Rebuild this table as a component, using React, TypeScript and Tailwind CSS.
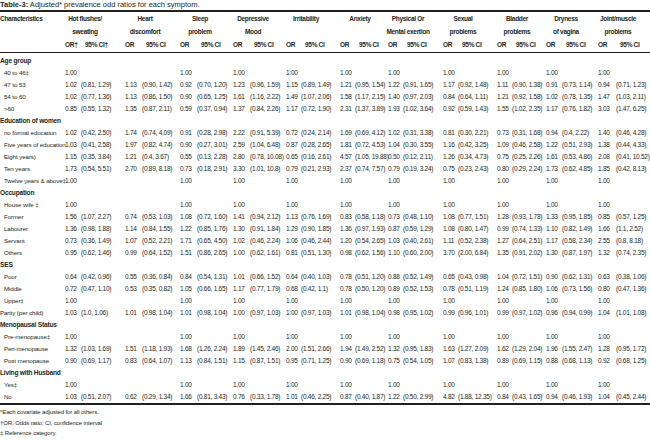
const GRID =
  'grid grid-cols-[65px_16px_44px_17px_38px_17px_36px_17px_36px_15px_39px_15px_33px_15px_40px_15px_39px_15px_34px_16px_36px_18px_34px]'

const FONT = "font-['Liberation_Sans_Narrow','Liberation_Sans',sans-serif]"

const symptoms = [
  ['Hot flushes/', 'sweating'],
  ['Heart', 'discomfort'],
  ['Sleep', 'problem'],
  ['Depressive', 'Mood'],
  ['Irritability', ''],
  ['Anxiety', ''],
  ['Physical Or', 'Mental exertion'],
  ['Sexual', 'problems'],
  ['Bladder', 'problems'],
  ['Dryness', 'of vagina'],
  ['Joint/muscle', 'problems'],
]

// reference category rows: heart discomfort column is left blank
const REF = '1.00|-|1.00|1.00|1.00|1.00|1.00|1.00|1.00|1.00|1.00'

type Row =
  | { section: string }
  | { label: string; values: string; plain?: boolean }

const rows: Row[] = [
  { section: 'Age group' },
  { label: '40 to 46‡', values: REF },
  {
    label: '47 to 53',
    values:
      '1.02 (0.81, 1.29)|1.13 (0.90, 1.42)|0.92 (0.70, 1.20)|1.23 (0.96, 1.59)|1.15 (0.89, 1.49)|1.21 (0.95, 1.54)|1.22 (0.91, 1.65)|1.17 (0.92, 1.48)|1.11 (0.90, 1.38)|0.91 (0.73, 1.14)|0.94 (0.71, 1.23)',
  },
  {
    label: '54 to 60',
    values:
      '1.02 (0.77, 1.36)|1.13 (0.86, 1.50)|0.90 (0.65, 1.25)|1.61 (1.16, 2.22)|1.49 (1.07, 2.06)|1.58 (1.17, 2.15)|1.40 (0.97, 2.03)|0.84 (0.64, 1.11)|1.21 (0.92, 1.58)|1.02 (0.78, 1.35)|1.47 (1.03, 2.11)',
  },
  {
    label: '>60',
    values:
      '0.85 (0.55, 1.32)|1.35 (0.87, 2.11)|0.59 (0.37, 0.94)|1.37 (0.84, 2.26)|1.17 (0.72, 1.90)|2.31 (1.37, 3.89)|1.93 (1.02, 3.64)|0.92 (0.59, 1.43)|1.55 (1.02, 2.35)|1.17 (0.76, 1.82)|3.03 (1.47, 6.25)',
  },
  { section: 'Education of women' },
  {
    label: 'no formal education',
    values:
      '1.02 (0.42, 2.50)|1.74 (0.74, 4.09)|0.91 (0.28, 2.98)|2.22 (0.91, 5.39)|0.72 (0.24, 2.14)|1.69 (0.69, 4.12)|1.02 (0.31, 3.38)|0.81 (0.30, 2.21)|0.73 (0.31, 1.68)|0.94 (0.4, 2.22)|1.40 (0.46, 4.28)',
  },
  {
    label: 'Five years of education',
    values:
      '1.03 (0.41, 2.58)|1.97 (0.82, 4.74)|0.90 (0.27, 3.01)|2.59 (1.04, 6.48)|0.87 (0.28, 2.65)|1.81 (0.72, 4.53)|1.04 (0.30, 3.55)|1.16 (0.42, 3.25)|1.09 (0.46, 2.58)|1.22 (0.51, 2.93)|1.38 (0.44, 4.33)',
  },
  {
    label: 'Eight years)',
    values:
      '1.15 (0.35, 3.84)|1.21 (0.4, 3.67)|0.55 (0.13, 2.28)|2.80 (0.78, 10.08)|0.65 (0.16, 2.61)|4.57 (1.05, 19.88)|0.50 (0.12, 2.11)|1.26 (0.34, 4.73)|0.75 (0.25, 2.26)|1.61 (0.53, 4.86)|2.08 (0.41, 10.52)',
  },
  {
    label: 'Ten years',
    values:
      '1.73 (0.54, 5.51)|2.70 (0.89, 8.18)|0.73 (0.18, 2.91)|3.30 (1.01, 10.8)|0.79 (0.21, 2.93)|2.37 (0.74, 7.57)|0.79 (0.19, 3.24)|0.75 (0.23, 2.43)|0.80 (0.29, 2.24)|1.73 (0.62, 4.85)|1.85 (0.42, 8.13)',
  },
  { label: 'Twelve years & above‡', values: REF },
  { section: 'Occupation' },
  { label: 'House wife ‡', values: REF },
  {
    label: 'Former',
    values:
      '1.56 (1.07, 2.27)|0.74 (0.53, 1.03)|1.08 (0.72, 1.60)|1.41 (0.94, 2.12)|1.13 (0.76, 1.69)|0.83 (0.58, 1.18)|0.73 (0.48, 1.10)|1.08 (0.77, 1.51)|1.28 (0.93, 1.78)|1.33 (0.95, 1.85)|0.85 (0.57, 1.25)',
  },
  {
    label: 'Labourer',
    values:
      '1.36 (0.98, 1.88)|1.14 (0.84, 1.55)|1.22 (0.85, 1.76)|1.30 (0.91, 1.84)|1.29 (0.90, 1.85)|1.36 (0.97, 1.93)|0.87 (0.59, 1.29)|1.08 (0.80, 1.47)|0.99 (0.74, 1.33)|1.10 (0.82, 1.49)|1.66 (1.1, 2.52)',
  },
  {
    label: 'Servant',
    values:
      '0.73 (0.36, 1.49)|1.07 (0.52, 2.21)|1.71 (0.65, 4.50)|1.02 (0.46, 2.24)|1.06 (0.46, 2.44)|1.20 (0.54, 2.65)|1.03 (0.40, 2.61)|1.11 (0.52, 2.38)|1.27 (0.64, 2.51)|1.17 (0.58, 2.34)|2.55 (0.8, 8.18)',
  },
  {
    label: 'Others',
    values:
      '0.95 (0.62, 1.46)|0.99 (0.64, 1.52)|1.51 (0.86, 2.65)|1.00 (0.62, 1.61)|0.81 (0.51, 1.30)|0.98 (0.62, 1.56)|1.10 (0.60, 2.00)|3.70 (2.00, 6.84)|1.35 (0.91, 2.02)|1.30 (0.87, 1.97)|1.32 (0.74, 2.35)',
  },
  { section: 'SES' },
  {
    label: 'Poor',
    values:
      '0.64 (0.42, 0.96)|0.55 (0.36, 0.84)|0.84 (0.54, 1.31)|1.01 (0.66, 1.52)|0.64 (0.40, 1.03)|0.78 (0.51, 1.20)|0.88 (0.52, 1.49)|0.65 (0.43, 0.98)|1.04 (0.72, 1.51)|0.90 (0.62, 1.31)|0.63 (0.38, 1.06)',
  },
  {
    label: 'Middle',
    values:
      '0.72 (0.47, 1.10)|0.53 (0.35, 0.82)|1.05 (0.66, 1.65)|1.17 (0.77, 1.79)|0.68 (0.42, 1.1)|0.78 (0.50, 1.20)|0.89 (0.52, 1.53)|0.78 (0.51, 1.19)|1.24 (0.85, 1.80)|1.06 (0.73, 1.56)|0.80 (0.47, 1.36)',
  },
  { label: 'Upper‡', values: REF },
  {
    label: 'Parity (per child)',
    plain: true,
    values:
      '1.03 (1.0, 1.06)|1.01 (0.98, 1.04)|1.01 (0.98, 1.04)|1.00 (0.97, 1.03)|1.00 (0.97, 1.03)|1.01 (0.98, 1.04)|0.98 (0.95, 1.02)|0.99 (0.96, 1.01)|0.99 (0.97, 1.02)|0.96 (0.94, 0.99)|1.04 (1.01, 1.08)',
  },
  { section: 'Menopausal Status' },
  { label: 'Pre-menopause‡', values: REF },
  {
    label: 'Peri-menopause',
    values:
      '1.32 (1.03, 1.69)|1.51 (1.18, 1.93)|1.68 (1.26, 2.24)|1.89 (1.45, 2.46)|2.00 (1.51, 2.66)|1.94 (1.49, 2.52)|1.32 (0.95, 1.83)|1.63 (1.27, 2.09)|1.62 (1.29, 2.04)|1.96 (1.55, 2.47)|1.28 (0.95, 1.72)',
  },
  {
    label: 'Post menopause',
    values:
      '0.90 (0.69, 1.17)|0.83 (0.64, 1.07)|1.13 (0.84, 1.51)|1.15 (0.87, 1.51)|0.95 (0.71, 1.25)|0.90 (0.69, 1.18)|0.75 (0.54, 1.05)|1.07 (0.83, 1.38)|0.89 (0.69, 1.15)|0.88 (0.68, 1.13)|0.92 (0.68, 1.25)',
  },
  { section: 'Living with Husband' },
  { label: 'Yes‡', values: REF },
  {
    label: 'No',
    values:
      '1.03 (0.51, 2.07)|0.62 (0.29, 1.34)|1.66 (0.81, 3.43)|0.76 (0.33, 1.78)|1.01 (0.46, 2.25)|0.87 (0.40, 1.87)|1.22 (0.50, 2.99)|4.82 (1.88, 12.35)|0.84 (0.43, 1.65)|0.94 (0.46, 1.93)|1.04 (0.45, 2.44)',
  },
]

function splitCells(values: string) {
  return values.split('|').map((v) => {
    if (v === '-') return ['', '']
    const i = v.indexOf(' ')
    return i < 0 ? [v, ''] : [v.slice(0, i), v.slice(i + 1)]
  })
}

function HeaderLine({ first, line }: { first: string; line: 0 | 1 }) {
  return (
    <div className={`${GRID} h-[12px] items-center leading-[12px]`}>
      <div className="whitespace-nowrap">{first}</div>
      {symptoms.map((s, i) => (
        <div key={i} className="col-span-2">
          <div className="flex w-[40px] justify-center whitespace-nowrap">{s[line]}</div>
        </div>
      ))}
    </div>
  )
}

export default function App() {
  return (
    <div className={`h-[446px] w-[650px] bg-white text-[#231f20] ${FONT}`}>
      <div className="h-[10px] whitespace-nowrap text-[7.5px] leading-[10px]">
        <span className="font-bold">Table-3:</span> Adjusted* prevalence odd ratios for each symptom.
      </div>
      <div className="h-[2px] bg-[#231f20]" />

      {/* column headers */}
      <div className="text-[6.5px] font-bold tracking-[-0.3px]">
        <div className="pt-[1px]">
          <HeaderLine first="Characteristics" line={0} />
        </div>
        <div className="pt-[1px]">
          <HeaderLine first="" line={1} />
        </div>
        <div className={`${GRID} h-[14px] items-center leading-[14px]`}>
          <div />
          {symptoms.map((_, i) => (
            <div key={i} className="contents">
              <div className="whitespace-nowrap">{i === 0 ? 'OR†' : 'OR'}</div>
              <div className="whitespace-nowrap pl-[4px]">{i === 0 ? '95% CI†' : '95% CI'}</div>
            </div>
          ))}
        </div>
      </div>
      <div className="h-px bg-[#231f20]" />

      {/* body */}
      <div className="pt-[2px]">
        {rows.map((r, idx) =>
          'section' in r ? (
            <div
              key={idx}
              className="h-[12px] whitespace-nowrap text-[6.6px] font-bold leading-[12px] tracking-[-0.2px]"
            >
              {r.section}
            </div>
          ) : (
            <div key={idx} className={`${GRID} h-[12px] items-center leading-[12px]`}>
              <div
                className={`whitespace-nowrap text-[6.2px] tracking-[-0.1px] ${r.plain ? '' : 'pl-[4px]'}`}
              >
                {r.label}
              </div>
              {splitCells(r.values).map(([or, ci], i) => (
                <div key={i} className="contents">
                  <div className="whitespace-nowrap text-[6.5px] tracking-[-0.25px]">{or}</div>
                  <div className="whitespace-nowrap text-[6.5px] tracking-[-0.25px]">{ci}</div>
                </div>
              ))}
            </div>
          )
        )}
      </div>
      <div className="h-[2px] bg-[#231f20]" />

      {/* footnotes */}
      <div className="pt-[2px] text-[6px] leading-[10.5px] tracking-[-0.1px]">
        <div>*Each covariate adjusted for all others.</div>
        <div>†OR, Odds ratio; CI, confidence interval</div>
        <div>‡ Reference category.</div>
      </div>
    </div>
  )
}
